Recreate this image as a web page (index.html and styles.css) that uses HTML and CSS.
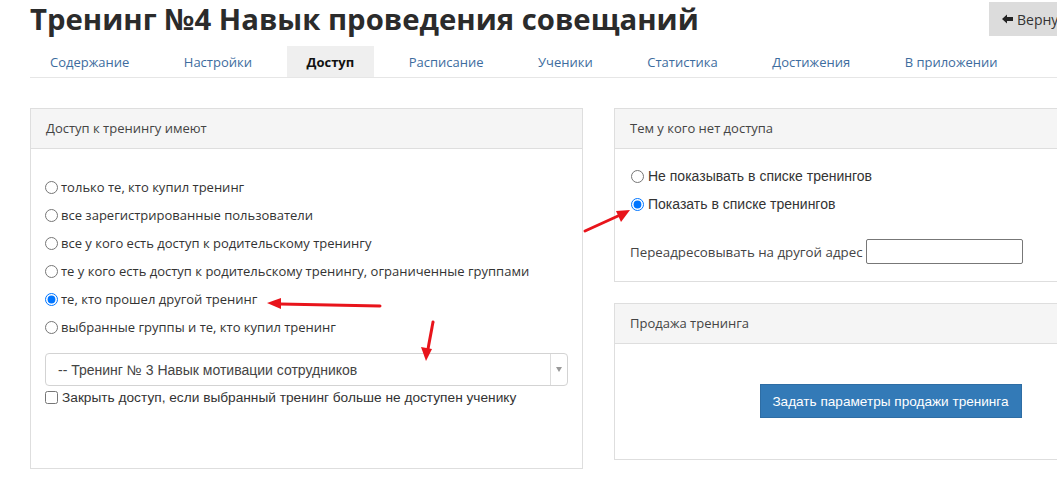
FILE: index.html
```html
<!DOCTYPE html>
<html lang="ru">
<head>
<meta charset="utf-8">
<title>Доступ</title>
<link rel="stylesheet" href="styles.css">
</head>
<body>
<div class="page">
  <div class="top">
    <h1 class="title">Тренинг №4 Навык проведения совещаний</h1>
    <button class="back"><svg class="back-arrow" width="11" height="10" viewBox="0 0 11 10"><path d="M0 5 L5 0.5 L5 3 L11 3 L11 7 L5 7 L5 9.5 Z" fill="#222"/></svg>Вернуться к списку</button>
  </div>
  <nav class="tabs">
    <a class="tab">Содержание</a>
    <a class="tab">Настройки</a>
    <a class="tab active">Доступ</a>
    <a class="tab">Расписание</a>
    <a class="tab">Ученики</a>
    <a class="tab">Статистика</a>
    <a class="tab">Достижения</a>
    <a class="tab">В приложении</a>
  </nav>
  <div class="cols">
    <div class="col">
      <div class="panel panel-left">
        <div class="panel-head">Доступ к тренингу имеют</div>
        <div class="panel-body left-body">
          <label class="radio"><input type="radio" name="a">только те, кто купил тренинг</label>
          <label class="radio"><input type="radio" name="a">все зарегистрированные пользователи</label>
          <label class="radio"><input type="radio" name="a">все у кого есть доступ к родительскому тренингу</label>
          <label class="radio"><input type="radio" name="a">те у кого есть доступ к родительскому тренингу, ограниченные группами</label>
          <label class="radio"><input type="radio" name="a" checked>те, кто прошел другой тренинг</label>
          <label class="radio"><input type="radio" name="a">выбранные группы и те, кто купил тренинг</label>
          <div class="select">
            <span class="select-text">-- Тренинг № 3 Навык мотивации сотрудников</span>
            <span class="select-arrow"><span class="caret"></span></span>
          </div>
          <label class="check"><input type="checkbox">Закрыть доступ, если выбранный тренинг больше не доступен ученику</label>
        </div>
      </div>
    </div>
    <div class="col">
      <div class="panel panel-r1">
        <div class="panel-head">Тем у кого нет доступа</div>
        <div class="panel-body r1-body">
          <label class="radio arial"><input type="radio" name="b">Не показывать в списке тренингов</label>
          <label class="radio arial"><input type="radio" name="b" checked>Показать в списке тренингов</label>
          <div class="redirect">Переадресовывать на другой адрес <input class="addr" type="text"></div>
        </div>
      </div>
      <div class="panel panel-r2">
        <div class="panel-head">Продажа тренинга</div>
        <div class="panel-body r2-body">
          <button class="btn-primary">Задать параметры продажи тренинга</button>
        </div>
      </div>
    </div>
  </div>
</div>
<svg class="marks" width="1057" height="492" viewBox="0 0 1057 492">
  <g stroke="#e8141b" stroke-width="3" stroke-linecap="round" fill="#e8141b">
    <line x1="585" y1="231" x2="618" y2="216"/>
    <polygon stroke="none" points="630,210 616,211 621,222"/>
    <line x1="380" y1="306" x2="280" y2="304"/>
    <polygon stroke="none" points="267,303 281,298 281,309"/>
    <line x1="433" y1="322" x2="428" y2="349"/>
    <polygon stroke="none" points="426,361 421,347 432,349"/>
  </g>
</svg>
</body>
</html>
```

FILE: styles.css
```css
html, body {
  margin: 0;
  padding: 0;
  overflow: hidden;
  background: #fff;
}
body {
  font-family: "Open Sans", "Liberation Sans", sans-serif;
  color: #333;
  position: relative;
  width: 1057px;
  height: 492px;
}
.page {
  width: 1138px;
  padding-left: 30px;
}
.top {
  display: flex;
  justify-content: space-between;
  align-items: flex-start;
  height: 46px;
}
.title {
  margin: 0;
  font-size: 29.3px;
  font-weight: 700;
  line-height: 39px;
  color: #2b2b2b;
  letter-spacing: 0;
}
.back {
  margin-top: 2px;
  width: 179px;
  height: 34px;
  padding: 0 0 0 13px;
  border: 0;
  background: #dcdcdc;
  color: #333;
  font-family: "Open Sans", sans-serif;
  font-size: 14px;
  display: flex;
  align-items: center;
  gap: 4px;
  white-space: nowrap;
}
.back-arrow {
  display: block;
}
.tabs {
  display: flex;
  gap: 14.5px;
  border-bottom: 1px solid #e6e6e6;
  height: 31px;
}
.tab {
  display: flex;
  align-items: center;
  padding: 0 20px;
  font-size: 13px;
  color: #3d6c9e;
  height: 31px;
}
.tab.active {
  background: #efefef;
  color: #111;
  font-weight: 700;
}
.cols {
  display: flex;
  gap: 31px;
  margin-top: 30px;
}
.col {
  width: 553px;
  display: flex;
  flex-direction: column;
  gap: 21px;
}
.panel {
  border: 1px solid #dedede;
}
.panel-head {
  background: #f5f5f5;
  border-bottom: 1px solid #dedede;
  height: 37px;
  padding: 0 0 2px 15px;
  display: flex;
  align-items: center;
  font-size: 13px;
  color: #444;
}
.panel-body {
  display: flex;
  flex-direction: column;
}
.left-body {
  padding: 24px 14px 0 14px;
  height: 295px;
}
.radio {
  display: flex;
  align-items: center;
  height: 28px;
  font-size: 13px;
  color: #333;
}
.radio input {
  margin: 0 3px 0 0;
  width: 13px;
  height: 13px;
}
.radio.arial {
  font-family: "Liberation Sans", Arial, sans-serif;
  font-size: 14px;
}
.radio.arial input {
  margin: 0 4px 0 1px;
}
.select {
  margin-top: 12px;
  height: 31px;
  border: 1px solid #d3d3d3;
  border-radius: 4px;
  display: flex;
  align-items: center;
  font-family: "Liberation Sans", Arial, sans-serif;
  font-size: 14px;
  color: #444;
}
.select-text {
  flex: 1;
  padding-left: 12px;
}
.select-arrow {
  width: 16px;
  height: 31px;
  border-left: 1px solid #ddd;
  display: flex;
  align-items: center;
  justify-content: center;
}
.caret {
  width: 0;
  height: 0;
  border-left: 3px solid transparent;
  border-right: 3px solid transparent;
  border-top: 5px solid #999;
}
.check {
  display: flex;
  align-items: center;
  margin-top: 1px;
  height: 20px;
  font-family: "Liberation Sans", Arial, sans-serif;
  font-size: 13.7px;
  color: #333;
}
.check input {
  margin: 0 4px 0 0;
  width: 13px;
  height: 13px;
}
.r1-body {
  padding: 13px 15px 0 15px;
  height: 119px;
}
.redirect {
  margin-top: 21px;
  display: flex;
  align-items: center;
  font-size: 13.3px;
  color: #444;
  gap: 3px;
}
.addr {
  border: 1px solid #777;
  border-radius: 2px;
  padding: 0;
  margin: 0;
  box-sizing: border-box;
  width: 157px;
  height: 25px;
}
.r2-body {
  align-items: center;
  padding-top: 40px;
  height: 75px;
}
.btn-primary {
  width: 262px;
  height: 34px;
  border: 1px solid #2e6da4;
  background: #337ab7;
  color: #fff;
  font-family: "Liberation Sans", Arial, sans-serif;
  font-size: 13.6px;
}
.marks {
  position: absolute;
  left: 0;
  top: 0;
  pointer-events: none;
}
```
